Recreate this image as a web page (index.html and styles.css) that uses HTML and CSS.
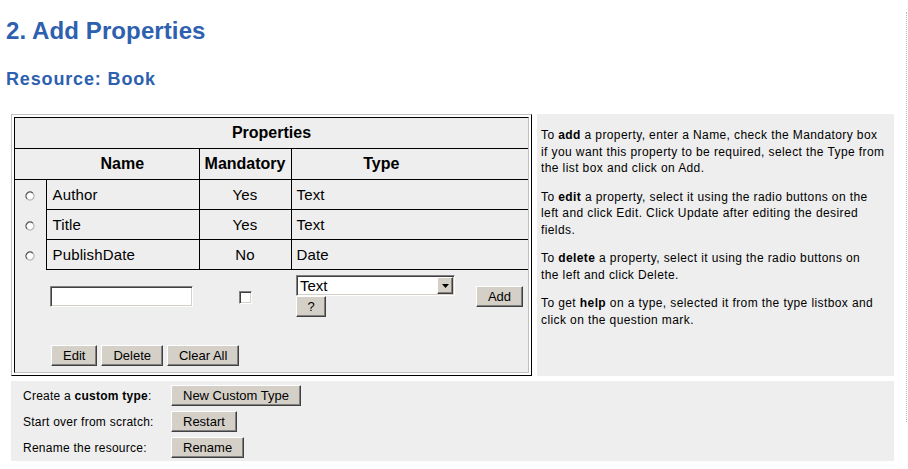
FILE: index.html
```html
<!DOCTYPE html>
<html>
<head>
<meta charset="utf-8">
<title>Add Properties</title>
<link rel="stylesheet" href="styles.css">
</head>
<body>
<h1 class="title">2. Add Properties</h1>
<h2 class="subtitle">Resource: Book</h2>
<div class="layout">
  <div class="main-row">
    <div class="frame">
      <div class="cell">
        <table class="props">
          <colgroup>
            <col class="c-radio"><col class="c-name"><col class="c-mand"><col class="c-type"><col class="c-add">
          </colgroup>
          <tr class="hdr">
            <th colspan="5" class="caption">Properties</th>
          </tr>
          <tr class="hdr">
            <th class="blank"></th>
            <th class="h-name">Name</th>
            <th class="h-mand">Mandatory</th>
            <th class="h-type">Type</th>
            <th class="h-add"></th>
          </tr>
          <tr class="row">
            <td class="radio"><svg class="radio-ico" width="10" height="10" viewBox="0 0 10 10"><circle cx="5" cy="5" r="4" fill="#fff"/><path d="M7.83 2.17A4 4 0 0 0 2.17 7.83" fill="none" stroke="#555" stroke-width="1.3"/><path d="M7.83 2.17A4 4 0 0 1 2.17 7.83" fill="none" stroke="#b4b4b4" stroke-width="1.3"/></svg></td>
            <td class="name">Author</td>
            <td class="mand">Yes</td>
            <td class="type">Text</td>
            <td class="add"></td>
          </tr>
          <tr class="row">
            <td class="radio"><svg class="radio-ico" width="10" height="10" viewBox="0 0 10 10"><circle cx="5" cy="5" r="4" fill="#fff"/><path d="M7.83 2.17A4 4 0 0 0 2.17 7.83" fill="none" stroke="#555" stroke-width="1.3"/><path d="M7.83 2.17A4 4 0 0 1 2.17 7.83" fill="none" stroke="#b4b4b4" stroke-width="1.3"/></svg></td>
            <td class="name">Title</td>
            <td class="mand">Yes</td>
            <td class="type">Text</td>
            <td class="add"></td>
          </tr>
          <tr class="row">
            <td class="radio"><svg class="radio-ico" width="10" height="10" viewBox="0 0 10 10"><circle cx="5" cy="5" r="4" fill="#fff"/><path d="M7.83 2.17A4 4 0 0 0 2.17 7.83" fill="none" stroke="#555" stroke-width="1.3"/><path d="M7.83 2.17A4 4 0 0 1 2.17 7.83" fill="none" stroke="#b4b4b4" stroke-width="1.3"/></svg></td>
            <td class="name">PublishDate</td>
            <td class="mand">No</td>
            <td class="type">Date</td>
            <td class="add"></td>
          </tr>
          <tr class="form">
            <td></td>
            <td class="name-in"><input type="text" class="text-input"></td>
            <td class="mand-in"><span class="check"></span></td>
            <td class="type-in">
              <div class="type-stack">
                <div class="select"><span class="select-text">Text</span><span class="select-arrow"><svg width="7" height="4" viewBox="0 0 7 4"><path d="M0 0H7L3.5 4Z" fill="#000"/></svg></span></div>
                <button class="btn btn-q">?</button>
              </div>
            </td>
            <td class="add-in"><button class="btn">Add</button></td>
          </tr>
        </table>
        <div class="actions">
          <button class="btn">Edit</button>
          <button class="btn">Delete</button>
          <button class="btn">Clear All</button>
        </div>
      </div>
    </div>
    <div class="help">
      <p>To <b>add</b> a property, enter a Name, check the Mandatory box<br>if you want this property to be required, select the Type from<br>the list box and click on Add.</p>
      <p>To <b>edit</b> a property, select it using the radio buttons on the<br>left and click Edit. Click Update after editing the desired<br>fields.</p>
      <p>To <b>delete</b> a property, select it using the radio buttons on<br>the left and click Delete.</p>
      <p>To get <b>help</b> on a type, selected it from the type listbox and<br>click on the question mark.</p>
    </div>
  </div>
  <div class="extras">
    <span class="label">Create a <b>custom type</b>:</span>
    <button class="btn">New Custom Type</button>
    <span class="label">Start over from scratch:</span>
    <button class="btn">Restart</button>
    <span class="label">Rename the resource:</span>
    <button class="btn">Rename</button>
  </div>
</div>
</body>
</html>
```
FILE: styles.css
```css
* { box-sizing: border-box; }

body {
  margin: 0;
  font-family: "Liberation Sans", Arial, sans-serif;
  background: #fff;
  color: #000;
}

body::after {
  content: "";
  position: fixed;
  left: 906px;
  top: 12px;
  height: 410px;
  border-left: 1px dotted #b8b8b8;
}

.title {
  font-size: 24px;
  line-height: 28px;
  font-weight: bold;
  letter-spacing: 0.1px;
  color: #2d60af;
  margin: 17px 0 0 6px;
}

.subtitle {
  font-size: 18px;
  line-height: 22px;
  font-weight: bold;
  letter-spacing: 0.85px;
  color: #2d60af;
  margin: 23px 0 0 6px;
}

.layout {
  margin: 24px 0 0 11px;
  width: 883px;
  display: flex;
  flex-direction: column;
  gap: 5px;
}

.main-row {
  display: flex;
  gap: 5px;
}

.frame {
  width: 521px;
  height: 262px;
  border: 1px solid;
  border-color: #c0c0c0 #000 #000 #c0c0c0;
  padding: 2px;
}

.cell {
  height: 100%;
  border: 1px solid;
  border-color: #000 #c0c0c0 #c0c0c0 #000;
  background: #eeeeee;
  display: flex;
  flex-direction: column;
}

.props {
  border-collapse: collapse;
  table-layout: fixed;
  width: 513px;
}

.c-radio { width: 31px; }
.c-name { width: 153px; }
.c-mand { width: 92px; }
.c-type { width: 180px; }
.c-add { width: 57px; }

.props th,
.props td {
  padding: 0;
}

.hdr th {
  height: 31px;
  border-bottom: 1px solid #000;
  font-size: 16px;
  font-weight: bold;
  text-align: center;
}

.hdr .caption {
  height: 30px;
}

.h-mand {
  border-left: 1px solid #000;
  border-right: 1px solid #000;
}

.row td {
  height: 30px;
  font-size: 15px;
  letter-spacing: 0.15px;
  vertical-align: middle;
}

.row .name,
.row .mand,
.row .type,
.row .add {
  border-bottom: 1px solid #000;
}

.row .name {
  border-left: 1px solid #000;
  padding-left: 6px;
}

.row .mand {
  border-left: 1px solid #000;
  border-right: 1px solid #000;
  text-align: center;
}

.row .type {
  padding-left: 5px;
}

.radio {
  text-align: center;
}

.radio-ico {
  display: inline-block;
  vertical-align: middle;
}

.form td {
  height: 54px;
  vertical-align: middle;
}

.name-in {
  padding-left: 4px !important;
}

.text-input {
  display: block;
  width: 143px;
  height: 21px;
  margin: 0;
  padding: 0 2px;
  background: #fff;
  border: 1px solid;
  border-color: #808080 #fff #fff #808080;
  box-shadow: inset 1px 1px #404040, inset -1px -1px #d4d0c8;
  outline: none;
}

.mand-in {
  text-align: center;
}

.check {
  display: inline-block;
  width: 13px;
  height: 13px;
  background: #fff;
  border: 1px solid;
  border-color: #808080 #fff #fff #808080;
  box-shadow: inset 1px 1px #404040, inset -1px -1px #d4d0c8;
  vertical-align: middle;
}

.type-in {
  padding-left: 5px !important;
}

.type-stack {
  display: flex;
  flex-direction: column;
  align-items: flex-start;
}

.select {
  display: flex;
  align-items: center;
  width: 159px;
  height: 21px;
  background: #fff;
  border: 1px solid;
  border-color: #808080 #fff #fff #808080;
  box-shadow: inset 1px 1px #404040, inset -1px -1px #d4d0c8;
  font-size: 15px;
}

.select-text {
  padding-left: 3px;
  flex: 1;
}

.select-arrow {
  width: 16px;
  height: 17px;
  margin-right: 1px;
  background: #d4d0c8;
  border: 1px solid;
  border-color: #fff #404040 #404040 #fff;
  box-shadow: inset -1px -1px #808080;
  display: flex;
  align-items: center;
  justify-content: center;
}

.select-arrow svg {
  display: block;
}

.add-in {
  text-align: center;
}

.btn {
  height: 21px;
  margin: 0;
  padding: 0 11px;
  font-family: "Liberation Sans", Arial, sans-serif;
  font-size: 13px;
  line-height: 17px;
  background: #d4d0c8;
  color: #000;
  border: 1px solid;
  border-color: #fff #404040 #404040 #fff;
  box-shadow: inset -1px -1px #808080;
  border-radius: 0;
}

.btn-q {
  width: 30px;
  padding: 0;
}

.actions {
  margin-top: auto;
  padding: 0 0 6px 36px;
  display: flex;
  gap: 4px;
}

.help {
  width: 357px;
  background: #eeeeee;
  padding: 1px 0 0 4px;
  font-size: 12px;
  line-height: 16.5px;
  letter-spacing: 0.4px;
}

.help p {
  margin: 12px 0;
  white-space: nowrap;
}

.extras {
  background: #eeeeee;
  display: grid;
  grid-template-columns: 148px auto;
  row-gap: 5px;
  padding: 4px 12px 3px;
  align-items: center;
  justify-items: start;
  font-size: 12px;
  letter-spacing: 0.25px;
}

.extras .btn {
  letter-spacing: 0;
}
```
